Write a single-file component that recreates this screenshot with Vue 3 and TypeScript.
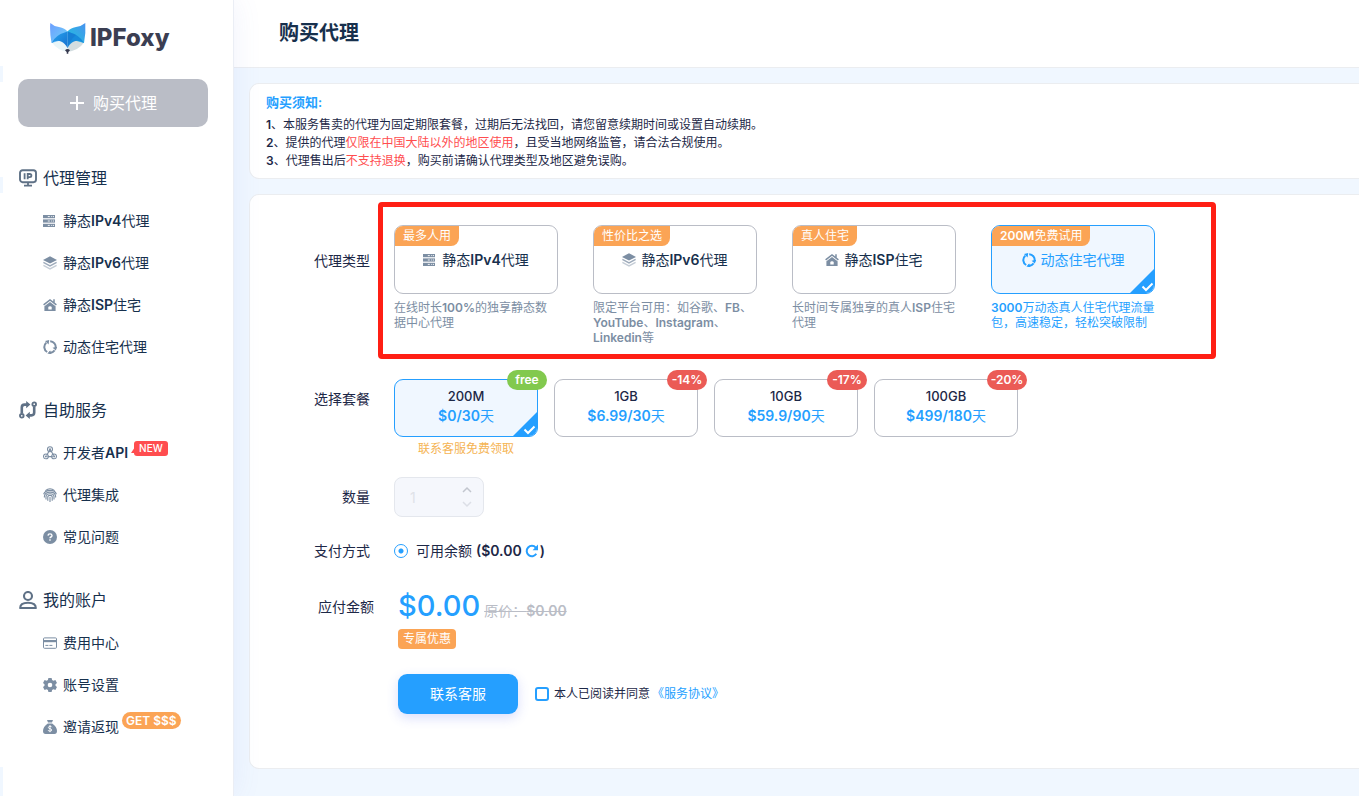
<script setup lang="ts">
import { h, ref } from 'vue'

interface NavItem { icon: string; label: string; isNew?: boolean; promo?: string }
interface NavGroup { icon: string; title: string; items: NavItem[] }
interface ProxyType { icon: string; name: string; tag: string; desc: string[] }
interface Plan { size: string; price: string; badge: string; free?: boolean; note?: string }

// Sets Latin letters and figures heavier than the Chinese text around them.
const MixedText = (props: { text: string }) =>
  h('span', props.text.split(/([!-~]+)/).filter(Boolean).map((part) =>
    /^[!-~]/.test(part) ? h('span', { class: 'latin' }, part) : part))
MixedText.props = ['text']

const groups: NavGroup[] = [
  {
    icon: 'ip', title: '代理管理',
    items: [
      { icon: 'server', label: '静态IPv4代理' },
      { icon: 'layers', label: '静态IPv6代理' },
      { icon: 'house', label: '静态ISP住宅' },
      { icon: 'cycle', label: '动态住宅代理' },
    ],
  },
  {
    icon: 'branch', title: '自助服务',
    items: [
      { icon: 'webhook', label: '开发者API', isNew: true },
      { icon: 'finger', label: '代理集成' },
      { icon: 'help', label: '常见问题' },
    ],
  },
  {
    icon: 'user', title: '我的账户',
    items: [
      { icon: 'card', label: '费用中心' },
      { icon: 'gear', label: '账号设置' },
      { icon: 'bag', label: '邀请返现', promo: 'GET $$$' },
    ],
  },
]

const types: ProxyType[] = [
  { icon: 'server', name: '静态IPv4代理', tag: '最多人用', desc: ['在线时长100%的独享静态数', '据中心代理'] },
  { icon: 'layers', name: '静态IPv6代理', tag: '性价比之选', desc: ['限定平台可用：如谷歌、FB、', 'YouTube、Instagram、', 'Linkedin等'] },
  { icon: 'house', name: '静态ISP住宅', tag: '真人住宅', desc: ['长时间专属独享的真人ISP住宅', '代理'] },
  { icon: 'cycle', name: '动态住宅代理', tag: '200M免费试用', desc: ['3000万动态真人住宅代理流量', '包，高速稳定，轻松突破限制'] },
]

const plans: Plan[] = [
  { size: '200M', price: '$0/30天', badge: 'free', free: true, note: '联系客服免费领取' },
  { size: '1GB', price: '$6.99/30天', badge: '-14%' },
  { size: '10GB', price: '$59.9/90天', badge: '-17%' },
  { size: '100GB', price: '$499/180天', badge: '-20%' },
]

const icons: Record<string, string> = {
  ip: '<rect x="1" y="1.2" width="16" height="12" rx="2.6" fill="none" stroke="currentColor" stroke-width="1.9"/><path d="M5.6 4.2v6M8.7 10.2V5h2.1a1.6 1.6 0 0 1 0 3.2H8.7M9 13v3M5 16.6h8" fill="none" stroke="currentColor" stroke-width="1.8"/>',
  branch: '<g fill="none" stroke="currentColor" stroke-width="2.6"><path d="M2.8 12.5V6.4q0-2.8 2.8-2.8h3"/><path d="M15.2 5.5v6.1q0 2.8-2.8 2.8h-3"/><circle cx="2.8" cy="14.8" r="1.8" stroke-width="1.9"/><circle cx="15.2" cy="3.2" r="1.8" stroke-width="1.9"/></g><path d="M7.2 0v7.2l4.2-3.6zM10.800 10.800V18l-4.200-3.600z" fill="currentColor"/>',
  user: '<g fill="none" stroke="currentColor" stroke-width="2.1"><circle cx="9" cy="5" r="4"/><path d="M1.200 17q0-5.200 7.800-5.200t7.800 5.200z" stroke-linejoin="round"/></g>',
  server: '<g fill="currentColor"><rect x="0" y="1" width="12" height="3.2"/><rect x="0" y="5.400" width="12" height="3.2"/><rect x="0" y="9.800" width="12" height="3.2"/></g><g stroke="#fff" stroke-width=".9"><path d="M4.800 2.600h2M8.200 2.600h1M10 2.600h1M4.800 7h2M8.200 7h1M10 7h1M4.800 11.400h2M8.200 11.400h1M10 11.400h1"/></g>',
  layers: '<path d="M7 .2 14 3.900 7 7.600 0 3.900z" fill="currentColor"/><path d="M.4 6.400 7 9.900l6.600-3.500" fill="none" stroke="currentColor" stroke-width="1.300" opacity=".75"/><path d="M.4 9.400 7 12.900l6.600-3.500" fill="none" stroke="currentColor" stroke-width="1.300" opacity=".45"/>',
  house: '<path d="M.6 6.900 7 1.900l6.400 5M11 1.300v3.400" fill="none" stroke="currentColor" stroke-width="1.500"/><path d="M1.400 8.200 7 4l5.600 4.200v4.800H1.400z" fill="currentColor"/><path d="M5.300 11.500V9.600q0-1.400 1.700-1.400t1.700 1.400v1.900z" fill="#fff"/>',
  cycle: '<g fill="none" stroke="currentColor" stroke-width="2"><path d="M4.200 12A5.700 5.700 0 0 1 3.300 2.700"/><path d="M7.200 1.300a5.700 5.700 0 0 1 5.400 6.700"/><path d="M11.600 10.400a5.700 5.700 0 0 1-5.700 2.100"/></g><path d="M2 1 6.200 0 5.600 4.400zM14.400 6.600l-1.600 3.800-3.200-2.600zM7.200 10.400 4.400 13.600l4.200.6z" fill="currentColor"/>',
  webhook: '<g fill="none" stroke="currentColor" stroke-width="1.100"><circle cx="7" cy="3.200" r="2.500"/><circle cx="2.900" cy="10.400" r="2.400"/><circle cx="11.100" cy="10.400" r="2.400"/><path d="M7 3.400 3.600 9.500M7 3.400l4 6.400M4.500 10.600h5.200"/></g><g fill="currentColor"><circle cx="7" cy="3.200" r="1"/><circle cx="2.900" cy="10.400" r="1"/><circle cx="11.100" cy="10.400" r="1"/></g>',
  finger: '<g fill="none" stroke="currentColor" stroke-width="1.100"><path d="M2.400 2.600Q7-1 11.600 2.600"/><path d="M.6 6.200Q2 2.500 7 2.400t6.400 3.800"/><path d="M1.400 9.400V8Q2 4.200 7 4.100t5.600 3.900v1.600"/><path d="M3 11.400V8.600Q3.300 5.800 7 5.800t4 2.800v2.800"/><path d="M4.800 12.800V9q0-1.600 2.200-1.600T9.200 9v3.800M7 9v5"/></g>',
  help: '<circle cx="7" cy="7" r="7" fill="currentColor"/><path d="M5 5.600Q5.100 3.900 7 3.900t2 1.600q0 1-1 1.500T7 8.300M7 9.300v1.400" fill="none" stroke="#fff" stroke-width="1.400"/>',
  card: '<rect x=".5" y="1.900" width="13" height="10.400" rx="1" fill="none" stroke="currentColor"/><path d="M.5 4h13v2.200H.5z" fill="currentColor"/><path d="M2.400 9.400h3M6.400 9.400h3" stroke="currentColor"/>',
  gear: '<path d="M5.400 0h3.200l.5 2 1.300.7 2-.6L14 4.900l-1.500 1.400v1.400L14 9.100l-1.600 2.800-2-.6-1.300.7-.5 2H5.400l-.5-2-1.300-.7-2 .6L0 9.100l1.500-1.400V6.300L0 4.900l1.600-2.800 2 .6L4.900 2z" fill="currentColor"/><circle cx="7" cy="7" r="2.300" fill="#fff"/>',
  bag: '<path d="M4 0h6L9 2.600H5zM4.800 3.600h4.400Q14 7 14 11q0 3-2.600 3H2.600Q0 14 0 11q0-4 4.800-7.400z" fill="currentColor"/><path d="M8.800 7.200Q8.300 6.200 7 6.200t-1.600 1.200Q5.400 8.500 7 8.700t1.700 1.300q0 1.200-1.700 1.200t-1.900-1.100M7 5.200v7" fill="none" stroke="#fff" stroke-width=".9"/>',
}

const activeType = ref(3)
const activePlan = ref(0)
const quantity = ref(1)
const agreed = ref(false)
</script>

<template>
  <div class="page">
    <aside class="sidebar">
      <a class="logo" href="#" aria-label="IPFoxy">
        <svg width="36" height="31" viewBox="0 0 36 31" aria-hidden="true">
          <defs>
            <linearGradient id="earL" x1="0" y1="0" x2="1" y2="1"><stop offset="0" stop-color="#6c9dff" /><stop offset="1" stop-color="#6fd3f7" /></linearGradient>
            <linearGradient id="earR" x1="1" y1="0" x2="0" y2="1"><stop offset="0" stop-color="#4a92f0" /><stop offset="1" stop-color="#1cc3dc" /></linearGradient>
            <linearGradient id="face" x1="0" y1="0" x2="1" y2="1"><stop offset="0" stop-color="#27a5ee" /><stop offset="1" stop-color="#1670cf" /></linearGradient>
          </defs>
          <path d="M2 19.500Q10 13 17.500 24V29Q7 27 2 19.500z" fill="#e9f5f8" />
          <path d="M34 19.500Q26 13 17.500 24V29Q29 27 34 19.500z" fill="#d3dde0" />
          <path d="M.3 0Q4 3.500 9 4 15 5 17.500 8.500L12 17 1.500 20Q-.5 9 .3 0z" fill="url(#earL)" />
          <path d="M35.300 0Q31 3.500 26 4 20 5 17.500 8.500L23 17 34 20Q36 9 35.300 0z" fill="url(#earR)" />
          <path d="M17.500 8.500Q5 12 1.700 20 7 16.500 11 18.500 15 20 17.500 25z" fill="url(#face)" />
          <path d="M17.500 8.500Q30 12 34 20 28 16.500 24 18.500 20 20 17.500 25z" fill="#178bdc" />
          <path d="M17.500 8.500 26 12Q20 17 17.500 25z" fill="#1576cf" opacity=".55" />
          <path d="M15 27.300q2.500-2.400 5 0l-1.700 1.800v1.700h-1.600v-1.700z" fill="#35384d" />
        </svg>
        <span>IPFoxy</span>
      </a>

      <button class="buy" type="button">
        <svg width="16" height="16" viewBox="0 0 16 16" aria-hidden="true"><path d="M8 1v14M1 8h14" stroke="#fff" stroke-width="2" /></svg>
        购买代理
      </button>

      <nav>
        <section v-for="group in groups" :key="group.title" class="group">
          <h2>
            <svg width="18" height="18" viewBox="0 0 18 18" aria-hidden="true" v-html="icons[group.icon]"></svg>
            {{ group.title }}
          </h2>
          <a v-for="item in group.items" :key="item.label" href="#" class="item">
            <svg width="14" height="14" viewBox="0 0 14 14" aria-hidden="true" v-html="icons[item.icon]"></svg>
            <MixedText :text="item.label" />
            <span v-if="item.isNew" class="new">NEW</span>
            <span v-if="item.promo" class="promo">{{ item.promo }}</span>
          </a>
        </section>
      </nav>
    </aside>

    <main>
      <header><h1>购买代理</h1></header>

      <section class="panel notice">
        <h3>购买须知:</h3>
        <p><b>1</b>、本服务售卖的代理为固定期限套餐，过期后无法找回，请您留意续期时间或设置自动续期。</p>
        <p><b>2</b>、提供的代理<em>仅限在中国大陆以外的地区使用</em>，且受当地网络监管，请合法合规使用。</p>
        <p><b>3</b>、代理售出后<em>不支持退换</em>，购买前请确认代理类型及地区避免误购。</p>
      </section>

      <form class="panel form" @submit.prevent>
        <div class="row types-row">
          <span id="type-label" class="label type-label">代理类型</span>
          <div class="types" role="group" aria-labelledby="type-label">
            <div v-for="(t, i) in types" :key="t.name" class="type" :class="{ active: i === activeType }">
              <button type="button" class="choice type-card" :aria-pressed="i === activeType" @click="activeType = i">
                <span class="tag"><MixedText :text="t.tag" /></span>
                <svg width="14" height="14" viewBox="0 0 14 14" aria-hidden="true" v-html="icons[t.icon]"></svg>
                <MixedText :text="t.name" />
                <svg v-if="i === activeType" class="corner" width="24" height="24" viewBox="0 0 24 24" aria-hidden="true"><path d="M24 0v24H0z" fill="#259fff" /><path d="m12.500 17.500 3.500 3.500 6.500-6.500" fill="none" stroke="#fff" stroke-width="2" /></svg>
              </button>
              <p><MixedText v-for="line in t.desc" :key="line" class="line" :text="line" /></p>
            </div>
            <div class="highlight"></div>
          </div>
        </div>

        <div class="row plans-row">
          <span id="plan-label" class="label plan-label">选择套餐</span>
          <div class="plans" role="group" aria-labelledby="plan-label">
            <div v-for="(p, i) in plans" :key="p.size" class="plan" :class="{ active: i === activePlan }">
              <button type="button" class="choice plan-card" :aria-pressed="i === activePlan" @click="activePlan = i">
                <span class="size">{{ p.size }}</span>
                <MixedText class="price" :text="p.price" />
                <svg v-if="i === activePlan" class="corner" width="24" height="24" viewBox="0 0 24 24" aria-hidden="true"><path d="M24 0v24H0z" fill="#259fff" /><path d="m11.500 17.500 3.500 3.500 6.500-6.500" fill="none" stroke="#fff" stroke-width="2" /></svg>
              </button>
              <span class="badge" :class="{ free: p.free }">{{ p.badge }}</span>
              <p v-if="p.note">{{ p.note }}</p>
            </div>
          </div>
        </div>

        <div class="row quantity-row">
          <label class="label" for="quantity">数量</label>
          <div class="number">
            <input id="quantity" v-model="quantity" type="number" min="1" disabled />
            <svg width="10" height="22" viewBox="0 0 10 22" aria-hidden="true"><path d="m1 6 4-4 4 4" fill="none" stroke="#c2c6ce" stroke-width="1.500" /><path d="m1 16 4 4 4-4" fill="none" stroke="#dcdfe6" stroke-width="1.500" /></svg>
          </div>
        </div>

        <div class="row pay-row">
          <span class="label">支付方式</span>
          <div class="balance">
            <input id="balance" type="radio" name="pay" checked />
            <label for="balance"><MixedText text="可用余额 ($0.00" /></label>
            <button type="button" aria-label="刷新余额">
              <svg width="14" height="14" viewBox="0 0 14 14" aria-hidden="true"><path d="M11.300 9.800A5.200 5.200 0 1 1 10.800 3.600" fill="none" stroke="#259fff" stroke-width="2" /><path d="M13 .5v5.700H7.600z" fill="#259fff" /></svg>
            </button>
            <MixedText text=")" />
          </div>
        </div>

        <div class="row wide amount-row">
          <span class="label">应付金额</span>
          <div>
            <div class="amount"><strong>$0.00</strong><del><MixedText text="原价：$0.00" /></del></div>
            <span class="offer">专属优惠</span>
          </div>
        </div>

        <div class="row wide submit-row">
          <span></span>
          <div class="submit">
            <button type="submit">联系客服</button>
            <input id="agree" v-model="agreed" type="checkbox" />
            <label for="agree">本人已阅读并同意</label>
            <a href="#">《服务协议》</a>
          </div>
        </div>
      </form>
    </main>
  </div>
</template>

<style>
body { margin: 0; }
</style>

<style scoped>
* { box-sizing: border-box; }
.page {
  display: flex;
  min-height: 100vh;
  background: #f0f7ff;
  color: #1d2847;
  font: 400 14px/20px Inter, "Noto Sans CJK SC", sans-serif;
}
.page :deep(.latin), .notice b { font-weight: 600; }
del :deep(.latin) { font-weight: 500; }
button, input { font: inherit; margin: 0; }
button { cursor: pointer; }
a { color: inherit; text-decoration: none; }
h1, h2, h3, p { margin: 0; }
svg { flex: none; }

.sidebar {
  position: relative;
  z-index: 1;
  flex: none;
  width: 234px;
  padding: 22px 25px 0 18px;
  background: #fff;
  border-right: 1px solid #ebeef5;
  box-shadow: 0 0 28px rgba(90, 110, 220, .09);
}
.sidebar::before {
  content: "";
  position: absolute;
  inset: 0 auto 0 0;
  width: 3px;
  background: linear-gradient(#fff 66px, #f0f7ff 66px 82px, #fff 82px 177px, #f0f7ff 177px 193px, #fff 193px 767px, #f0f7ff 767px);
}
.logo {
  display: flex;
  align-items: center;
  gap: 4px;
  height: 32px;
  padding-left: 32px;
  color: #3b3e52;
  font-size: 24px;
  font-weight: 800;
  line-height: 32px;
}
.buy {
  display: flex;
  align-items: center;
  justify-content: center;
  gap: 8px;
  width: 100%;
  height: 48px;
  margin: 25px 0 29px;
  border: 0;
  border-radius: 10px;
  background: #babdc6;
  color: #fff;
  font-size: 16px;
}
.group { margin-bottom: 20px; }
.group h2 {
  display: flex;
  align-items: center;
  gap: 6px;
  height: 44px;
  padding-left: 1px;
  color: #17304d;
  font-size: 16px;
  font-weight: 400;
}
.group h2 svg { color: #5f7186; }
.item {
  display: flex;
  align-items: center;
  gap: 6px;
  height: 42px;
  padding-left: 25px;
  color: #17304d;
  white-space: nowrap;
}
.item svg, .type svg { color: #7c8ea3; }
.new, .promo { position: relative; color: #fff; }
.new {
  height: 15px;
  margin-bottom: 9px;
  padding: 0 5px;
  border-radius: 3px;
  background: #ff4d4f;
  font-size: 10px;
  font-weight: 500;
  line-height: 15px;
}
.new::before {
  content: "";
  position: absolute;
  left: -3px;
  bottom: 3px;
  border: solid transparent;
  border-width: 6px 4px 0 0;
  border-right-color: #ff4d4f;
}
.promo {
  height: 17px;
  margin: 0 0 14px -3px;
  padding: 0 4px;
  border-radius: 9px;
  background: #fba455;
  font-size: 12px;
  font-weight: 600;
  line-height: 17px;
}

main { flex: 1; min-width: 0; }
header {
  height: 68px;
  padding: 18px 45px;
  border-bottom: 1px solid #ebedf0;
  background: #fff;
}
h1 { color: #17304d; font-size: 20px; font-weight: 700; line-height: 30px; }
.panel {
  margin: 15px 0 0 15px;
  border: 1px solid #ebedf0;
  border-right: 0;
  border-radius: 10px 0 0 10px;
  background: #fff;
}
.notice { padding: 9px 16px 8px; font-size: 12px; line-height: 18px; }
.notice h3 { margin-bottom: 5px; color: #259fff; font-size: 13px; font-weight: 600; line-height: 18px; }
.notice em { color: #ff4d4f; font-style: normal; }

.form { padding: 30px 0 54px; }
.row { display: grid; grid-template-columns: 120px 1fr; column-gap: 24px; align-items: center; }
.row.wide { grid-template-columns: 124px 1fr; }
.label { text-align: right; }
.types-row, .plans-row, .amount-row { align-items: start; }
.type-label { padding-top: 26px; }
.plan-label { padding-top: 10px; }
.types { position: relative; display: flex; gap: 35px; width: max-content; }
.highlight {
  position: absolute;
  inset: -23px -61px -14px -16px;
  border: 5px solid #ff1f14;
  border-radius: 4px;
  pointer-events: none;
}
.type { width: 164px; }
.type p { margin-top: 6px; color: #7c8ea3; font-size: 12px; line-height: 15px; white-space: nowrap; }
.line { display: block; }
.type.active p { color: #259fff; }
.choice {
  position: relative;
  display: flex;
  width: 100%;
  overflow: hidden;
  border: 1px solid #babdc6;
  border-radius: 9px;
  background: #fff;
  color: #1d2847;
}
.type-card { align-items: center; justify-content: center; gap: 5px; height: 69px; padding: 0; color: #17304d; }
.active .choice { border-color: #259fff; background: #f0f7ff; }
.active .type-card, .type.active svg { color: #259fff; }
.tag {
  position: absolute;
  top: 0;
  left: 0;
  padding: 0 8px;
  border-bottom-right-radius: 8px;
  background: #fba455;
  color: #fff;
  font-size: 12px;
  line-height: 20px;
}
.corner { position: absolute; right: 0; bottom: 0; }
.plans-row { margin-top: 34px; }
.plans { display: flex; gap: 16px; }
.plan { position: relative; width: 144px; }
.plan-card { flex-direction: column; align-items: center; height: 58px; padding: 6px 0; }
.size { font-size: 13px; font-weight: 500; }
.price { color: #259fff; }
.badge {
  position: absolute;
  top: -9px;
  right: -9px;
  min-width: 40px;
  border-radius: 10px;
  background: #eb5b56;
  color: #fff;
  font-size: 12px;
  font-weight: 600;
  line-height: 20px;
  text-align: center;
}
.badge.free { background: #82c94e; }
.plan p { height: 40px; padding-top: 3px; color: #f5b454; font-size: 12px; line-height: 18px; text-align: center; }
.number { position: relative; width: 90px; }
.number input {
  display: block;
  width: 100%;
  height: 40px;
  padding: 0 30px 0 15px;
  border: 1px solid #e4e7ed;
  border-radius: 8px;
  background: #f5f7fc;
  color: #dfe2e8;
  appearance: textfield;
}
.number svg { position: absolute; top: 9px; right: 12px; }
.pay-row { margin-top: 24px; }
.balance { display: flex; align-items: center; }
.balance input {
  width: 14px;
  height: 14px;
  margin-right: 8px;
  appearance: none;
  border: 1px solid #259fff;
  border-radius: 50%;
  background: radial-gradient(circle, #259fff 2px, #fff 3px);
}
.balance button { display: flex; margin: 0 1px 0 3px; padding: 0; border: 0; background: none; }
.amount-row { margin-top: 25px; }
.amount-row .label { padding-top: 11px; }
.amount { display: flex; align-items: baseline; gap: 4px; height: 43px; }
.amount strong { color: #259fff; font-size: 29px; font-weight: 500; line-height: 40px; }
.amount del { color: #babdc6; }
.offer {
  display: block;
  width: max-content;
  padding: 0 5px;
  border-radius: 4px;
  background: #fba455;
  color: #fff;
  font-size: 12px;
  line-height: 20px;
}
.submit-row { margin-top: 25px; }
.submit { display: flex; align-items: center; font-size: 12px; }
.submit button {
  width: 120px;
  height: 40px;
  margin-right: 17px;
  border: 0;
  border-radius: 9px;
  background: #259fff;
  box-shadow: 0 4px 12px rgba(70, 90, 240, .2);
  color: #fff;
  font-size: 14px;
}
.submit input {
  width: 14px;
  height: 14px;
  margin-right: 5px;
  appearance: none;
  border: 2px solid #259fff;
  border-radius: 3px;
  background: #fff;
}
.submit input:checked { background: #259fff; }
.submit a { color: #259fff; margin-left: 2px; }
</style>
